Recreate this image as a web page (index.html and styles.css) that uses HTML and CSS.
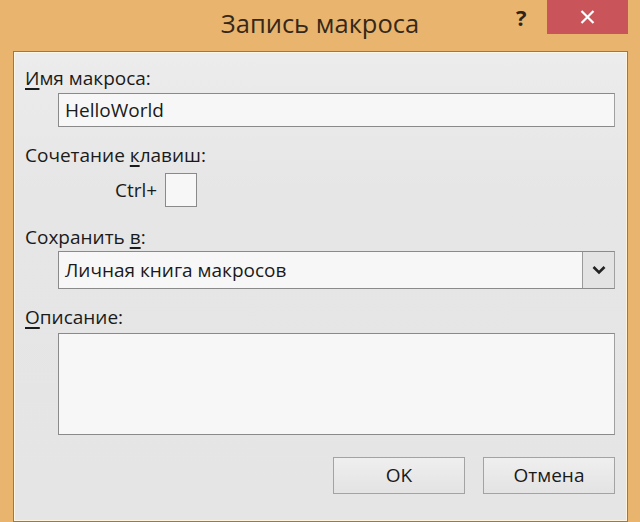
FILE: index.html
```html
<!DOCTYPE html>
<html lang="ru">
<head>
<meta charset="utf-8">
<title>Запись макроса</title>
<link rel="stylesheet" href="styles.css">
</head>
<body>
<div class="window">
  <div class="titlebar">
    <div class="title">Запись макроса</div>
    <div class="help">?</div>
    <div class="close">
      <svg width="15" height="14" viewBox="0 0 15 14"><path d="M1.5 1 L13.5 13 M13.5 1 L1.5 13" stroke="#fff" stroke-width="2.2" fill="none"/></svg>
    </div>
  </div>
  <div class="client">
    <div class="label"><u>И</u>мя макроса:</div>
    <div class="field name">HelloWorld</div>
    <div class="label l2">Сочетание <u>к</u>лавиш:</div>
    <div class="ctrl-row">
      <span class="ctrl">Ctrl+</span>
      <span class="keybox"></span>
    </div>
    <div class="label l3">Сохранить <u>в</u>:</div>
    <div class="field select">
      <span class="select-text">Личная книга макросов</span>
      <span class="drop">
        <svg width="14" height="10" viewBox="0 0 14 10"><path d="M1.5 2 L7 7.5 L12.5 2" stroke="#222" stroke-width="2.6" fill="none"/></svg>
      </span>
    </div>
    <div class="label l4"><u>О</u>писание:</div>
    <div class="field desc"></div>
    <div class="buttons">
      <div class="btn">OK</div>
      <div class="btn">Отмена</div>
    </div>
  </div>
</div>
</body>
</html>
```

FILE: styles.css
```css
html, body {
  margin: 0;
  padding: 0;
}
body {
  width: 640px;
  height: 522px;
  overflow: hidden;
  font-family: "Open Sans", "Noto Sans", sans-serif;
}
.window {
  width: 640px;
  height: 522px;
  background: #e9b56e;
  display: flex;
  flex-direction: column;
}
.titlebar {
  height: 51px;
  position: relative;
  flex: none;
}
.title {
  position: absolute;
  left: 0;
  right: 0;
  top: 8px;
  text-align: center;
  font-size: 25.5px;
  color: #35281a;
  line-height: 30px;
}
.help {
  position: absolute;
  left: 516px;
  top: 3px;
  font-size: 22px;
  font-weight: bold;
  color: #2e2418;
  line-height: 28px;
}
.close {
  position: absolute;
  left: 547px;
  top: 0;
  width: 81px;
  height: 34px;
  background: #c9545a;
  display: flex;
  align-items: center;
  justify-content: center;
}
.client {
  margin: 0 12px 0 13px;
  height: 458px;
  border: 1px solid #8f7a5a;
  box-shadow: inset 1px 1px 0 #fff6e6, inset -1px -1px 0 #fff3dd;
  background: linear-gradient(#ececec, #e6e6e6 30%, #e5e5e5);
  padding: 15px 12px 0 11px;
  font-size: 19px;
  color: #1a1a1a;
}
.label {
  line-height: 22px;
  height: 22px;
  white-space: nowrap;
}
.label u {
  text-decoration-thickness: 1.5px;
  text-underline-offset: 3px;
}
.field {
  margin-left: 33px;
  background: #f7f7f7;
  border: 1px solid #8a8a8a;
  border-right-color: #a0a0a0;
  box-sizing: border-box;
}
.name {
  margin-top: 4px;
  height: 34px;
  line-height: 32px;
  padding-left: 6px;
}
.l2 {
  margin-top: 17px;
}
.ctrl-row {
  margin-top: 7px;
  padding-left: 90px;
  display: flex;
  align-items: center;
  height: 34px;
}
.ctrl {
  line-height: 22px;
}
.keybox {
  width: 32px;
  height: 34px;
  box-sizing: border-box;
  margin-left: 8px;
  background: #f7f7f7;
  border: 1px solid #8a8a8a;
}
.l3 {
  margin-top: 19px;
}
.select {
  margin-top: 3px;
  height: 38px;
  display: flex;
  align-items: stretch;
}
.select-text {
  flex: 1;
  line-height: 36px;
  padding-left: 6px;
}
.drop {
  width: 31px;
  border-left: 1px solid #9a9a9a;
  background: #e3e3e3;
  display: flex;
  align-items: center;
  justify-content: center;
}
.l4 {
  margin-top: 17px;
}
.desc {
  margin-top: 5px;
  height: 102px;
}
.buttons {
  margin-top: 22px;
  display: flex;
  justify-content: flex-end;
  gap: 18px;
}
.btn {
  width: 132px;
  height: 37px;
  box-sizing: border-box;
  border: 1px solid #a3a3a3;
  background: linear-gradient(#efefef, #e3e3e3);
  text-align: center;
  line-height: 35px;
  font-size: 19px;
}
```
